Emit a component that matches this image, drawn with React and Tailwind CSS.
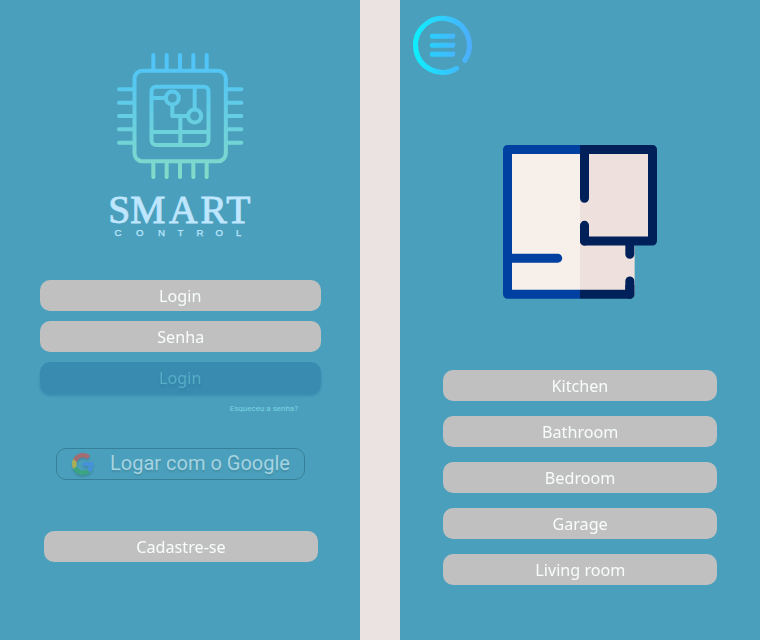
const pill =
  "flex h-[31px] shrink-0 items-center justify-center rounded-[10px] bg-[#c0c0c0] font-['Noto_Sans',sans-serif] text-[17px] leading-none text-[#f8fdfc]";

function Label({ children }) {
  return <span className="scale-x-[0.95] whitespace-nowrap">{children}</span>;
}

function ChipLogo() {
  return (
    <svg className="mt-10 h-[140px] w-40 shrink-0" viewBox="0 0 480 420" fill="none" strokeWidth="12" strokeLinecap="round" strokeLinejoin="round">
      <defs>
        <linearGradient id="chip" gradientUnits="userSpaceOnUse" x1="0" y1="40" x2="0" y2="416">
          <stop offset="0" stopColor="#4fc3fa" />
          <stop offset="0.25" stopColor="#56c7f0" />
          <stop offset="1" stopColor="#84dcc8" />
        </linearGradient>
      </defs>
      <g stroke="url(#chip)">
        <rect x="103.500" y="92" width="274" height="272" rx="24" />
        <rect x="154.500" y="140" width="171" height="175" rx="14" />
        <path d="M160 45V90M200 45V90M240 45V90M280 45V90M320 45V90M160 366V411M200 366V411M240 366V411M280 366V411M320 366V411" />
        <path d="M57 148H102M57 188H102M57 228H102M57 268H102M57 308H102M379 148H424M379 188H424M379 228H424M379 268H424M379 308H424" />
        <circle cx="217" cy="174" r="19.500" />
        <circle cx="284" cy="228" r="19.500" />
        <path d="M160 174H197M217 194V228H264M284 145V208M241 230V312M158 276H323" />
      </g>
    </svg>
  );
}

function Wordmark() {
  return (
    <svg className="h-[65px] w-40 shrink-0" viewBox="0 0 160 65" fill="#bfe6ff" stroke="#bfe6ff">
      <text x="8.200 30.300 69 100.500 126.300" y="42.800" fontSize="39.500" strokeWidth="0.9" fontFamily="'Liberation Serif', serif">SMART</text>
      <text x="14.500 36 58 77.500 96.500 115.500 136" y="55.800" fontSize="9.700" strokeWidth="0.25" fontFamily="'Liberation Sans', sans-serif">CONTROL</text>
    </svg>
  );
}

function GoogleMark() {
  return (
    <svg className="h-6 w-6 opacity-55 drop-shadow-[0_2px_1px_rgba(0,0,0,0.25)]" viewBox="0 0 24 24">
      <path fill="#4285F4" d="M22.560 12.250c0-.78-.07-1.530-.2-2.250H12v4.260h5.920c-.26 1.370-1.040 2.530-2.210 3.310v2.770h3.570c2.080-1.920 3.280-4.740 3.280-8.090z" />
      <path fill="#34A853" d="M12 23c2.970 0 5.460-.98 7.280-2.660l-3.570-2.770c-.98.66-2.230 1.060-3.710 1.060-2.860 0-5.290-1.930-6.160-4.530H2.180v2.840C3.990 20.530 7.700 23 12 23z" />
      <path fill="#FBBC05" d="M5.840 14.090c-.22-.66-.35-1.360-.35-2.090s.13-1.430.35-2.090V7.070H2.180C1.430 8.550 1 10.220 1 12s.43 3.450 1.180 4.930l3.660-2.840z" />
      <path fill="#EA4335" d="M12 5.380c1.620 0 3.060.56 4.210 1.640l3.150-3.150C17.450 2.090 14.970 1 12 1 7.700 1 3.990 3.470 2.180 7.070l3.660 2.840c.87-2.600 3.300-4.530 6.160-4.530z" />
    </svg>
  );
}

function MenuIcon() {
  return (
    <svg className="h-[90px] w-[90px] shrink-0" viewBox="0 0 270 270" fill="none" strokeWidth="15" strokeLinecap="round">
      <defs>
        <linearGradient id="menu" gradientUnits="userSpaceOnUse" x1="39" y1="0" x2="216" y2="0">
          <stop offset="0" stopColor="#0cf0fc" />
          <stop offset="1" stopColor="#4facfe" />
        </linearGradient>
        <linearGradient id="bars" gradientUnits="userSpaceOnUse" x1="90" y1="0" x2="165" y2="0">
          <stop offset="0" stopColor="#28cffd" />
          <stop offset="1" stopColor="#46b6fe" />
        </linearGradient>
      </defs>
      <path stroke="url(#menu)" d="M169.600 205.200A81 81 0 1 1 194.600 181.400" />
      <path stroke="url(#bars)" d="M97 109H158V109.010M97 136H158V136.010M97 163H158V163.010" />
    </svg>
  );
}

function FloorPlan() {
  return (
    <svg className="mt-[45px] h-[170px] w-[170px] shrink-0 self-center" viewBox="0 0 510 510" fill="none" strokeWidth="27" strokeLinecap="round" strokeLinejoin="round">
      <path fill="#f7efea" d="M38 43H255V478H38z" />
      <path fill="#ede0dd" d="M255 43H472V318H419V478H255z" />
      <path stroke="#0040a0" strokeLinecap="butt" d="M255 43.500H37.500V478H255" />
      <path stroke="#0040a0" d="M38 369.500H188" />
      <path stroke="#002059" strokeLinecap="butt" d="M255 43.500H472.500V318H268.500V300" />
      <path stroke="#002059" d="M268.500 45V190M268.500 271V318M404.500 320V358M404.500 438V478" />
      <path stroke="#002059" strokeLinecap="butt" d="M255 478H404.500V450" />
    </svg>
  );
}

const rooms = ["Kitchen", "Bathroom", "Bedroom", "Garage", "Living room"];

export default function App() {
  return (
    <main className="flex h-[640px] w-[760px] justify-between overflow-hidden bg-[#ebe2e2]">
      <section className="flex w-[360px] flex-col items-center bg-[#4aa0bc]">
        <ChipLogo />
        <Wordmark />
        <div className="mt-[35px] ml-px flex w-[281px] flex-col gap-2.5">
          <div className={pill}><Label>Login</Label></div>
          <div className={pill}><Label>Senha</Label></div>
          <button className="flex h-[31px] items-center justify-center rounded-[10px] bg-[#398bb0] font-['Noto_Sans',sans-serif] text-[17px] leading-none text-[#56adc6] shadow-[0_3px_3px_#398bb0] [text-shadow:0_3px_3px_rgba(0,0,0,0.08)]"><Label>Login</Label></button>
        </div>
        <a className="mt-[10px] mr-[62px] flex h-[11px] items-center self-end font-[Roboto,sans-serif] text-[8px] leading-none text-[#7ad3e2]">Esqueceu a senha?</a>
        <button className="mt-[34px] ml-px flex h-8 w-[249px] shrink-0 items-center rounded-[10px] border border-[#377f98] pl-[14px] font-[Roboto,sans-serif] text-[20px] leading-none text-[#a5d3e1] [text-shadow:0_2px_2px_rgba(0,0,0,0.12)]">
          <GoogleMark />
          <span className="ml-[15px] pb-0.5 whitespace-nowrap">Logar com o Google</span>
        </button>
        <div className={`${pill} mt-[51px] ml-[2px] w-[274px]`}><Label>Cadastre-se</Label></div>
      </section>
      <section className="flex w-[360px] flex-col bg-[#4aa0bc]">
        <MenuIcon />
        <FloorPlan />
        <div className="mt-[65px] flex w-[274px] flex-col gap-[15px] self-center">
          {rooms.map((room) => (
            <div key={room} className={pill}><Label>{room}</Label></div>
          ))}
        </div>
      </section>
    </main>
  );
}
